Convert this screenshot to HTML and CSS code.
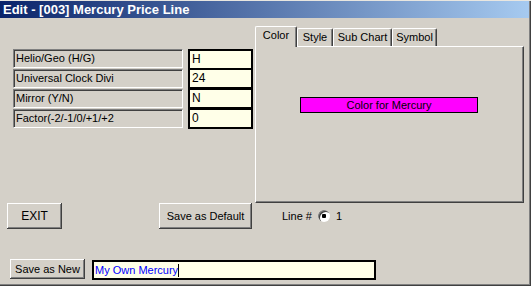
FILE: index.html
```html
<!DOCTYPE html>
<html lang="en">

<head>
	<meta charset="UTF-8">
	<title>Edit - [003] Mercury Price Line</title>
	<link rel="stylesheet" href="styles.css">
</head>

<body>
<div class="window">
	<div class="titlebar">Edit - [003] Mercury Price Line</div>
	<div class="client">
		<div class="upper">
			<div class="fields">
				<div class="field"><span class="label">Helio/Geo (H/G)</span><span class="value">H</span></div>
				<div class="field"><span class="label">Universal Clock Divi</span><span class="value">24</span></div>
				<div class="field"><span class="label">Mirror (Y/N)</span><span class="value">N</span></div>
				<div class="field"><span class="label">Factor(-2/-1/0/+1/+2</span><span class="value">0</span></div>
			</div>
			<div class="tabs">
				<div class="tabstrip">
					<span class="tab active">Color</span>
					<span class="tab">Style</span>
					<span class="tab">Sub Chart</span>
					<span class="tab">Symbol</span>
				</div>
				<div class="panel">
					<div class="swatch">Color for Mercury</div>
				</div>
			</div>
		</div>
		<div class="actions">
			<button class="btn exit">EXIT</button>
			<button class="btn default">Save as Default</button>
			<div class="lineno">Line # <span class="radio"></span> 1</div>
		</div>
		<div class="saverow">
			<button class="btn savenew">Save as New</button>
			<div class="name">My Own Mercury<span class="caret"></span></div>
		</div>
	</div>
</div>
</body>

</html>
```

FILE: styles.css
```css
* {
	padding: 0;
	margin: 0;
	box-sizing: border-box;
}

body {
	background: #d4d0c8;
	font-family: 'Liberation Sans', Arial, sans-serif;
	font-size: 11px;
	color: #000;
}

.window {
	width: 531px;
	height: 286px;
	background: #d4d0c8;
	border-top: 1px solid #e8e6e0;
	padding: 0 2px 2px 0;
	box-shadow: inset -1px -1px #404040, inset -2px -2px #808080;
	display: flex;
	flex-direction: column;
}

.titlebar {
	height: 17px;
	line-height: 17px;
	padding-left: 3px;
	font-weight: bold;
	font-size: 13px;
	color: #fff;
	background: linear-gradient(to right, #0a246a, #a6caf0);
	white-space: nowrap;
}

.client {
	flex: 1;
	display: flex;
	flex-direction: column;
}

.upper {
	height: 185px;
	display: flex;
	align-items: flex-start;
}

/* left field list */
.fields {
	margin: 31px 0 0 13px;
	width: 240px;
}

.field {
	display: flex;
	height: 20px;
}

.label {
	width: 170px;
	height: 19px;
	line-height: 17px;
	padding-left: 2px;
	border-top: 1px solid #808080;
	border-left: 1px solid #808080;
	border-right: 1px solid #fff;
	border-bottom: 1px solid #fff;
	box-shadow: inset 1px 1px #404040;
	white-space: nowrap;
	overflow: hidden;
}

.value {
	width: 65px;
	height: 21px;
	margin-left: 5px;
	line-height: 17px;
	padding-left: 2px;
	font-size: 12px;
	background: #ffffe8;
	border: 2px solid #000;
}

.field + .field .value {
	margin-top: -1px;
}

/* tab control */
.tabs {
	margin: 8px 0 0 2px;
	width: 269px;
}

.tabstrip {
	display: flex;
	align-items: flex-end;
	height: 20px;
	position: relative;
	z-index: 1;
}

.tab {
	height: 18px;
	line-height: 17px;
	text-align: center;
	border-top: 1px solid #fff;
	border-left: 1px solid #fff;
	border-right: 1px solid #404040;
	box-shadow: inset -1px 0 #808080;
	border-radius: 2px 2px 0 0;
}

.tab:nth-child(1) { width: 42px; }
.tab:nth-child(2) { width: 36px; }
.tab:nth-child(3) { width: 59px; }
.tab:nth-child(4) { width: 45px; }

.tab.active {
	height: 21px;
	margin-bottom: -1px;
	line-height: 17px;
	background: #d4d0c8;
}

.panel {
	height: 157px;
	border-top: 1px solid #fff;
	border-left: 1px solid #fff;
	border-right: 1px solid #404040;
	border-bottom: 1px solid #404040;
	box-shadow: inset -1px -1px #808080;
	padding: 50px 0 0 44px;
}

.swatch {
	width: 178px;
	height: 16px;
	line-height: 14px;
	text-align: center;
	background: #ff00ff;
	border: 1px solid #000;
}

/* buttons */
.btn {
	font-family: 'Liberation Sans', Arial, sans-serif;
	font-size: 11px;
	color: #000;
	background: #d4d0c8;
	border: 0;
	box-shadow: inset -1px -1px #404040, inset 1px 1px #fff, inset -2px -2px #808080;
}

.actions {
	height: 26px;
	display: flex;
	align-items: center;
}

.exit {
	width: 55px;
	height: 26px;
	margin-left: 7px;
	font-size: 12px;
}

.default {
	width: 93px;
	height: 26px;
	margin-left: 97px;
}

.lineno {
	margin-left: 30px;
	display: flex;
	align-items: center;
	white-space: pre;
}

.radio {
	width: 12px;
	height: 12px;
	margin: 0 3px;
	border-radius: 50%;
	background: #fff radial-gradient(circle, #000 2px, transparent 2.5px);
	box-shadow: inset 1px 1px #808080, inset 2px 2px #404040;
}

.saverow {
	margin-top: 30px;
	display: flex;
	align-items: flex-start;
}

.savenew {
	width: 75px;
	height: 20px;
	margin-left: 10px;
}

.name {
	width: 284px;
	height: 20px;
	margin: 1px 0 0 7px;
	padding-left: 1px;
	line-height: 16px;
	color: #0000ff;
	background: #ffffe8;
	border: 2px solid #000;
	display: flex;
	align-items: center;
}

.caret {
	width: 1px;
	height: 13px;
	background: #000;
}
```
